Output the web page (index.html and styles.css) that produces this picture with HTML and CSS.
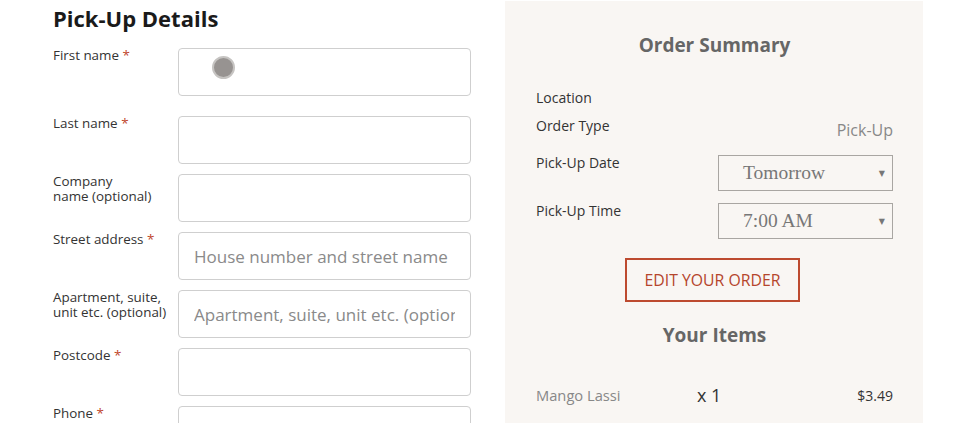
FILE: index.html
```html
<!DOCTYPE html>
<html lang="en">
<head>
<meta charset="utf-8">
<title>Pick-Up Details</title>
<link rel="stylesheet" href="styles.css">
</head>
<body>
<div class="page">
  <section class="details">
    <h2 class="details-title">Pick-Up Details</h2>
    <div class="form">
      <div class="row row-first">
        <label class="label">First name <span class="req">*</span></label>
        <div class="field">
          <input class="input" type="text">
          <span class="touch"></span>
        </div>
      </div>
      <div class="row">
        <label class="label">Last name <span class="req">*</span></label>
        <div class="field"><input class="input" type="text"></div>
      </div>
      <div class="row">
        <label class="label"><span class="line">Company</span><span class="line">name (optional)</span></label>
        <div class="field"><input class="input" type="text"></div>
      </div>
      <div class="row">
        <label class="label">Street address <span class="req">*</span></label>
        <div class="field"><input class="input" type="text" placeholder="House number and street name"></div>
      </div>
      <div class="row">
        <label class="label"><span class="line">Apartment, suite,</span><span class="line">unit etc. (optional)</span></label>
        <div class="field"><input class="input" type="text" placeholder="Apartment, suite, unit etc. (optional)"></div>
      </div>
      <div class="row">
        <label class="label">Postcode <span class="req">*</span></label>
        <div class="field"><input class="input" type="text"></div>
      </div>
      <div class="row">
        <label class="label">Phone <span class="req">*</span></label>
        <div class="field"><input class="input" type="text"></div>
      </div>
    </div>
  </section>

  <aside class="summary">
    <h3 class="summary-title">Order Summary</h3>
    <div class="info">
      <div class="info-row info-location">
        <span class="info-label">Location</span>
      </div>
      <div class="info-row info-type">
        <span class="info-label">Order Type</span>
        <span class="info-value">Pick-Up</span>
      </div>
      <div class="info-row info-date">
        <span class="info-label">Pick-Up Date</span>
        <div class="select"><span>Tomorrow</span><span class="caret">&#9660;</span></div>
      </div>
      <div class="info-row info-time">
        <span class="info-label">Pick-Up Time</span>
        <div class="select"><span>7:00 AM</span><span class="caret">&#9660;</span></div>
      </div>
    </div>
    <div class="edit-wrap">
      <button class="edit-btn" type="button">EDIT YOUR ORDER</button>
    </div>
    <h3 class="items-title">Your Items</h3>
    <div class="item">
      <span class="item-name">Mango Lassi</span>
      <span class="item-qty">x 1</span>
      <span class="item-price">$3.49</span>
    </div>
  </aside>
</div>
</body>
</html>
```

FILE: styles.css
```css
* { box-sizing: border-box; }

html, body {
  margin: 0;
  padding: 0;
  background: #ffffff;
  font-family: "Open Sans", "Noto Sans", "Liberation Sans", sans-serif;
  color: #333;
  overflow: hidden;
}

.page {
  display: flex;
  align-items: flex-start;
  padding-left: 53px;
  gap: 34px;
}

/* Left column */
.details {
  width: 418px;
}

.details-title {
  margin: 3px 0 15px;
  font-size: 22px;
  line-height: 30px;
  font-weight: 700;
  color: #1a1a1a;
}

.form {
  display: flex;
  flex-direction: column;
  gap: 10px;
}

.row {
  display: grid;
  grid-template-columns: 125px 293px;
  align-items: start;
}

.row-first {
  margin-bottom: 10px;
}

.label {
  display: block;
  font-size: 13.4px;
  line-height: 15px;
  color: #333;
  white-space: nowrap;
}

.label .line {
  display: block;
}

.req {
  color: #c0462c;
}

.field {
  position: relative;
}

.input {
  display: block;
  width: 293px;
  height: 48px;
  margin: 0;
  padding: 0 15px;
  border: 1px solid #cfcfcf;
  border-radius: 4px;
  background: #fff;
  font-family: "Open Sans", "Noto Sans", sans-serif;
  font-size: 17px;
  color: #333;
  outline: none;
}

.input::placeholder {
  color: #8a8a8a;
}

.touch {
  position: absolute;
  left: 34px;
  top: 8px;
  width: 23px;
  height: 23px;
  border-radius: 50%;
  background: #979391;
  border: 2px solid #c6c4c2;
}

/* Right column */
.summary {
  width: 418px;
  margin-top: 1px;
  height: 430px;
  background: #f9f6f3;
  padding: 0 30px 0 31px;
}

.summary-title {
  margin: 0;
  padding-top: 31px;
  text-align: center;
  font-size: 19px;
  line-height: 26px;
  font-weight: 700;
  color: #666;
}

.info {
  margin-top: 32px;
}

.info-row {
  display: flex;
  justify-content: space-between;
  align-items: flex-start;
}

.info-label {
  font-size: 14px;
  line-height: 16px;
  color: #333;
}

.info-location {
  height: 18px;
}

.info-type {
  margin-top: 9px;
  height: 26px;
  padding-top: 1px;
}

.info-value {
  font-size: 16px;
  line-height: 20px;
  padding-top: 2px;
  color: #888;
}

.info-date {
  margin-top: 12px;
}

.info-time {
  margin-top: 12px;
}

.select {
  width: 175px;
  height: 36px;
  border: 1px solid #a9a6a2;
  background: #f9f6f3;
  display: flex;
  align-items: center;
  justify-content: space-between;
  padding: 0 7px 0 24px;
  font-family: "Liberation Serif", "Times New Roman", serif;
  font-size: 19.5px;
  color: #777;
}

.caret {
  font-family: "DejaVu Sans", sans-serif;
  font-size: 8px;
  color: #777;
}

.edit-wrap {
  display: flex;
  justify-content: center;
  margin-top: 19px;
}

.edit-btn {
  width: 175px;
  height: 44px;
  margin-left: -4px;
  background: transparent;
  border: 2px solid #bd4a2f;
  color: #b5452c;
  font-family: "Open Sans", "Noto Sans", sans-serif;
  font-size: 15.8px;
  padding: 0;
  cursor: pointer;
}

.items-title {
  margin: 20px 0 0;
  text-align: center;
  font-size: 19px;
  line-height: 26px;
  font-weight: 700;
  color: #666;
}

.item {
  display: grid;
  grid-template-columns: 161px 1fr auto;
  align-items: center;
  margin-top: 35px;
}

.item-name {
  font-size: 14.7px;
  color: #888;
}

.item-qty {
  font-size: 18px;
  color: #333;
}

.item-price {
  font-size: 14px;
  color: #333;
}
```
